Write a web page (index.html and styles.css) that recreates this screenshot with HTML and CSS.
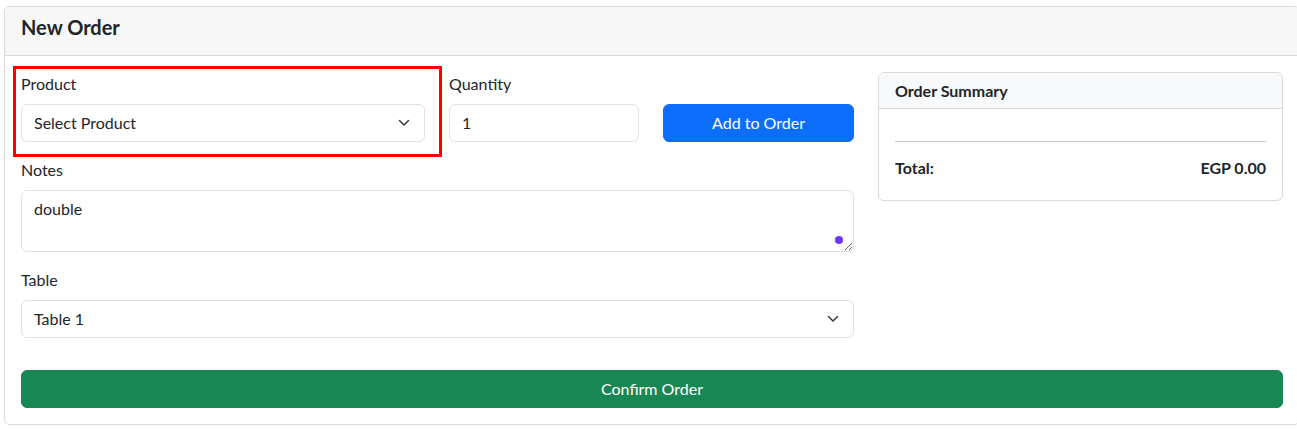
FILE: index.html
```html
<!DOCTYPE html>
<html lang="en">
<head>
<meta charset="utf-8">
<title>New Order</title>
<link rel="stylesheet" href="styles.css">
</head>
<body>
<div class="card">
  <div class="card-header">
    <h5 class="card-title">New Order</h5>
  </div>
  <div class="card-body">
    <div class="main-row">
      <div class="form-col">
        <div class="item-row">
          <div class="field highlighted">
            <label class="form-label">Product</label>
            <div class="select">
              <span>Select Product</span>
              <svg class="chevron" viewBox="0 0 12 8" width="12" height="8"><path d="M1.5 1.5 6 6l4.5-4.5" fill="none" stroke="#343a40" stroke-width="1.5" stroke-linecap="round" stroke-linejoin="round"/></svg>
            </div>
          </div>
          <div class="field">
            <label class="form-label">Quantity</label>
            <div class="input">1</div>
          </div>
          <div class="field field-end">
            <button class="btn btn-primary">Add to Order</button>
          </div>
        </div>
        <div class="field mb">
          <label class="form-label">Notes</label>
          <div class="textarea-wrap">
            <textarea class="textarea" rows="2">double</textarea>
            <span class="ext-dot"></span>
          </div>
        </div>
        <div class="field mb">
          <label class="form-label">Table</label>
          <div class="select">
            <span>Table 1</span>
            <svg class="chevron" viewBox="0 0 12 8" width="12" height="8"><path d="M1.5 1.5 6 6l4.5-4.5" fill="none" stroke="#343a40" stroke-width="1.5" stroke-linecap="round" stroke-linejoin="round"/></svg>
          </div>
        </div>
      </div>
      <div class="summary-col">
        <div class="summary">
          <div class="summary-header">
            <h6 class="summary-title">Order Summary</h6>
          </div>
          <div class="summary-body">
            <div class="items"></div>
            <hr class="divider">
            <div class="total-row">
              <strong>Total:</strong>
              <strong>EGP 0.00</strong>
            </div>
          </div>
        </div>
      </div>
    </div>
    <button class="btn btn-success btn-block">Confirm Order</button>
  </div>
</div>
</body>
</html>
```
FILE: styles.css
```css
* { box-sizing: border-box; }
html, body { margin: 0; }
body {
  padding: 6px 0 0 4px;
  overflow: hidden;
  background: #fff;
  color: #212529;
  font-family: Lato, "Liberation Sans", Arial, sans-serif;
  font-size: 16px;
  line-height: 1.5;
}
.card {
  width: 1296px;
  border: 1px solid #d9d9d9;
  border-radius: 6px;
  background: #fff;
}
.card-header {
  background: #f7f7f7;
  border-bottom: 1px solid #d9d9d9;
  padding: 8px 16px;
  border-radius: 5px 5px 0 0;
}
.card-title {
  margin: 0 0 8px;
  font-size: 20px;
  font-weight: 700;
  line-height: 24px;
}
.card-body { padding: 16px; }
.main-row {
  display: grid;
  grid-template-columns: 833px 1fr;
  column-gap: 24px;
}
.item-row {
  display: grid;
  grid-template-columns: 404px 190px 1fr;
  column-gap: 24px;
  margin-bottom: 16px;
}
.field { position: relative; display: flex; flex-direction: column; }
.field-end { justify-content: flex-end; }
.mb { margin-bottom: 16px; }
.highlighted::after {
  content: "";
  position: absolute;
  top: -6px; left: -8px; right: -17px; bottom: -15px;
  border: 3px solid #ff0000;
  pointer-events: none;
}
.form-label {
  display: block;
  margin-bottom: 8px;
  line-height: 24px;
}
.select, .input, .textarea {
  border: 1px solid #dee2e6;
  border-radius: 6px;
  background: #fff;
  padding: 6px 12px;
  line-height: 24px;
  font: inherit;
  color: #212529;
}
.select {
  display: flex;
  align-items: center;
  justify-content: space-between;
  height: 38px;
  padding-right: 14px;
}
.chevron { flex: none; display: block; }
.input { height: 38px; }
.textarea-wrap { position: relative; }
.textarea {
  display: block;
  width: 100%;
  height: 62px;
  resize: vertical;
  outline: none;
}
.ext-dot {
  position: absolute;
  right: 11px;
  bottom: 8px;
  width: 8px;
  height: 8px;
  border-radius: 50%;
  background: #6c34ff;
}
.btn {
  font: inherit;
  line-height: 24px;
  height: 38px;
  border: 1px solid transparent;
  border-radius: 6px;
  padding: 6px 12px;
  color: #fff;
  text-align: center;
  cursor: pointer;
}
.btn-primary { background: #0d6efd; border-color: #0d6efd; width: 100%; }
.btn-success { background: #198754; border-color: #198754; }
.btn-block { display: block; width: 100%; margin-top: 16px; }
.summary {
  border: 1px solid #d9d9d9;
  border-radius: 6px;
  overflow: hidden;
}
.summary-header {
  background: #f8f9fa;
  border-bottom: 1px solid #d9d9d9;
  padding: 8px 16px;
}
.summary-title {
  margin: 0;
  font-size: 16px;
  font-weight: 700;
  line-height: 1.2;
}
.summary-body { padding: 16px 16px 20px; }
.divider {
  margin: 16px 0 14px;
  border: 0;
  border-top: 1px solid #c9c9c9;
}
.total-row {
  display: flex;
  justify-content: space-between;
  line-height: 24px;
}
.total-row strong { font-weight: 700; }
```
